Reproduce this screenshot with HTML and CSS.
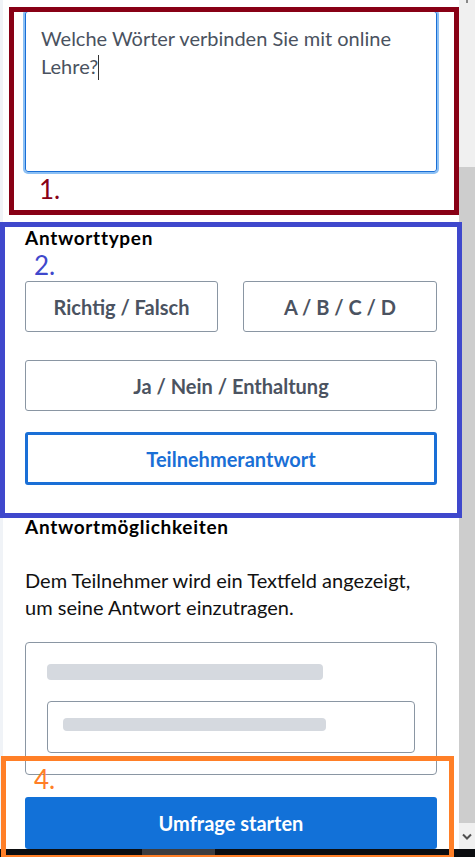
FILE: index.html
```html
<!DOCTYPE html>
<html lang="de">
  <head>
    <meta charset="UTF-8" />
    <meta name="viewport" content="width=device-width, initial-scale=1.0" />
    <title>Umfrage erstellen</title>
    <link rel="stylesheet" href="styles.css">
  </head>
  <body>
    <div class="window">
      <div class="viewport">
        <main class="page">
          <div class="question-input">Welche Wörter verbinden Sie mit online Lehre?<span class="caret"></span></div>

          <section class="types">
            <h3 class="section-title">Antworttypen</h3>
            <div class="type-grid">
              <button class="type-btn">Richtig / Falsch</button>
              <button class="type-btn">A / B / C / D</button>
              <button class="type-btn wide">Ja / Nein / Enthaltung</button>
              <button class="type-btn wide active">Teilnehmerantwort</button>
            </div>
          </section>

          <section class="options">
            <h3 class="section-title">Antwortmöglichkeiten</h3>
            <p class="options-desc">
              Dem Teilnehmer wird ein Textfeld angezeigt,<br />
              um seine Antwort einzutragen.
            </p>
            <div class="preview">
              <div class="skeleton skeleton-label"></div>
              <div class="preview-input">
                <div class="skeleton skeleton-text"></div>
              </div>
            </div>
          </section>

          <button class="btn-start">Umfrage starten</button>
        </main>
        <div class="hscroll"><span class="hscroll-thumb"></span></div>
      </div>

      <div class="vscroll">
        <span class="vscroll-up"></span>
        <span class="vscroll-thumb"></span>
        <span class="vscroll-down">
          <svg width="10" height="7" viewBox="0 0 10 7"><path d="M1 1.5 L5 5.5 L9 1.5" fill="none" stroke="#505050" stroke-width="2"/></svg>
        </span>
      </div>

      <!-- annotation frames drawn over the screenshot -->
      <div class="mark mark-red"><span class="mark-num">1.</span></div>
      <div class="mark mark-blue"><span class="mark-num">2.</span></div>
      <div class="mark mark-orange"><span class="mark-num">4.</span></div>
    </div>
  </body>
</html>
```

FILE: styles.css
```css
body {
  margin: 0;
  padding: 0;
  font-family: "Lato", "Open Sans", sans-serif;
  color: #111;
  background-color: #fff;
  overflow: hidden;
}

.window {
  position: relative;
  width: 475px;
  height: 857px;
  display: flex;
  overflow: hidden;
}

.viewport {
  width: 459px;
  height: 857px;
  display: flex;
  flex-direction: column;
}

.page {
  flex: 1;
  overflow: hidden;
  background-color: #fff;
  border-left: 3px solid #f0f3f7;
  padding: 0 22px;
}

.question-input {
  box-sizing: border-box;
  margin-top: 11px;
  height: 161px;
  border: 1px solid #1a6fd6;
  border-radius: 3px;
  box-shadow: 0 0 0 2px #8cc0f4;
  padding: 12px 15px;
  font-size: 20px;
  line-height: 28px;
  color: #4a5260;
}

.caret {
  display: inline-block;
  width: 1px;
  height: 25px;
  background-color: #333;
  vertical-align: -6px;
}

.section-title {
  margin: 0;
  font-size: 19px;
  line-height: 22px;
  font-weight: bold;
  letter-spacing: 0.7px;
  color: #000;
}

.types {
  margin-top: 55px;
}

.type-grid {
  display: grid;
  grid-template-columns: 193px 194px;
  justify-content: space-between;
  row-gap: 28px;
  margin-top: 32px;
}

.type-btn {
  height: 51px;
  background-color: #fff;
  border: 1px solid #8a96a3;
  border-radius: 3px;
  font-family: inherit;
  font-size: 20px;
  font-weight: bold;
  color: #4b5361;
  cursor: pointer;
}

.type-btn.wide {
  grid-column: 1 / 3;
}

.type-btn.active {
  height: 53px;
  margin-top: -7px;
  border: 3px solid #1a6fd6;
  color: #1a6fd6;
}

.options {
  margin-top: 31px;
}

.options-desc {
  margin: 29px 0 0;
  font-size: 20px;
  line-height: 27px;
  color: #111;
}

.preview {
  margin-top: 21px;
  border: 1px solid #8a96a3;
  border-radius: 4px;
  padding: 21px;
}

.skeleton {
  background-color: #d5d9df;
  border-radius: 4px;
}

.skeleton-label {
  width: 276px;
  height: 16px;
}

.preview-input {
  box-sizing: border-box;
  margin-top: 21px;
  height: 52px;
  border: 1px solid #8a96a3;
  border-radius: 4px;
  padding: 16px 15px 0;
}

.skeleton-text {
  width: 263px;
  height: 13px;
}

.btn-start {
  display: block;
  width: 100%;
  height: 52px;
  margin-top: 22px;
  background-color: #1271d8;
  border: none;
  border-radius: 3px;
  color: #fff;
  font-family: inherit;
  font-size: 20px;
  font-weight: bold;
  cursor: pointer;
}

.hscroll {
  height: 8px;
  background-color: #0b0d10;
  position: relative;
}

.hscroll-thumb {
  position: absolute;
  left: 142px;
  top: 0;
  width: 73px;
  height: 8px;
  background-color: #3d3d3f;
}

.vscroll {
  width: 16px;
  height: 857px;
  display: flex;
  flex-direction: column;
  background-color: #f0f0f0;
}

.vscroll-up {
  height: 167px;
  position: relative;
}

.vscroll-up::before {
  content: "";
  position: absolute;
  left: 7px;
  top: 0;
  width: 2px;
  height: 3px;
  background-color: #888;
}

.vscroll-thumb {
  height: 656px;
  background-color: #cdcdcd;
}

.vscroll-down {
  height: 26px;
  display: flex;
  justify-content: center;
  align-items: center;
}

.vscroll::after {
  content: "";
  height: 8px;
  background-color: #0b0d10;
}

/* annotation frames */
.mark {
  position: absolute;
  box-sizing: border-box;
  border: 5px solid;
}

.mark-num {
  position: absolute;
  font-family: "Lato", sans-serif;
  font-size: 26px;
  line-height: 18px;
}

.mark-red {
  left: 9px;
  top: 7px;
  width: 450px;
  height: 208px;
  border-color: #880015;
  color: #880015;
}

.mark-red .mark-num {
  left: 25px;
  top: 168px;
}

.mark-blue {
  left: 0;
  top: 222px;
  width: 462px;
  height: 296px;
  border-color: #3f48cc;
  color: #3f48cc;
}

.mark-blue .mark-num {
  left: 29px;
  top: 29px;
}

.mark-orange {
  left: 1px;
  top: 756px;
  width: 453px;
  height: 104px;
  border-color: #ff7f27;
  color: #ff7f27;
}

.mark-orange .mark-num {
  left: 28px;
  top: 9px;
}
```
